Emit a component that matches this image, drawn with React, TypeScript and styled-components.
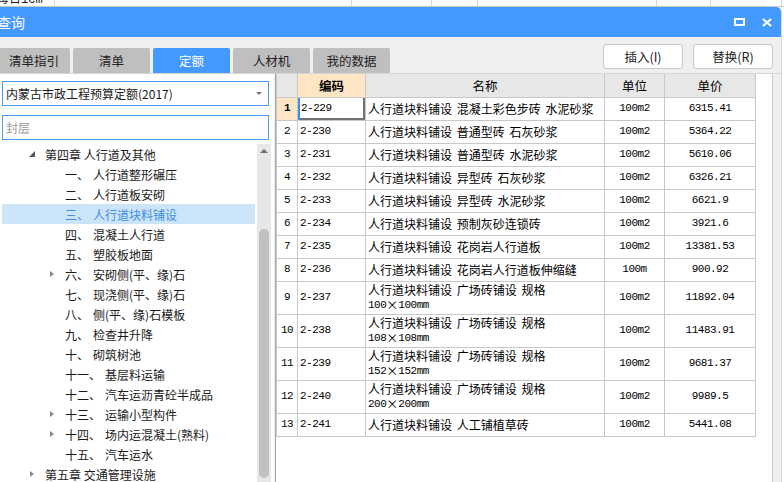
import styled, { createGlobalStyle } from "styled-components";

const GlobalStyle = createGlobalStyle`
  html, body {
    margin: 0;
    padding: 0;
    width: 784px;
    height: 482px;
    overflow: hidden;
    background: #ffffff;
    font-family: "Noto Sans CJK SC", "Noto Sans", sans-serif;
  }
  * { box-sizing: border-box; }
`;

const Screen = styled.div`
  display: flex;
  flex-direction: column;
  width: 784px;
  height: 482px;
  overflow: hidden;
`;

// strip of the sheet behind the dialog
const BackSheet = styled.div`
  display: flex;
  height: 7px;
  border-bottom: 1px solid #c6c6c6;
  background: #fff;
  overflow: hidden;
`;

const BackCell = styled.div<{ $w: number }>`
  flex: 0 0 ${({ $w }) => $w}px;
  border-right: 1px solid #d4d4d4;
  overflow: hidden;
  font-size: 12px;
  line-height: 12px;
  color: #222;
`;

const BackText = styled.div`
  margin-top: -6px;
  margin-left: -3px;
  font-family: "Liberation Mono", "Noto Sans CJK SC", monospace;
`;

const Dialog = styled.div`
  flex: 1;
  display: flex;
  flex-direction: column;
  margin-right: 2px;
  background: #f0f0f0;
  border-top-right-radius: 5px;
  border-right: 1px solid #d8d8d8;
  min-height: 0;
`;

const TitleBar = styled.div`
  height: 30px;
  flex: 0 0 30px;
  display: flex;
  align-items: center;
  justify-content: space-between;
  background: #4499ff;
  border-top-right-radius: 5px;
  color: #fff;
`;

const Title = styled.span`
  margin-left: -3px;
  font-size: 14px;
`;

const WinButtons = styled.div`
  display: flex;
  align-items: center;
  gap: 17px;
  padding-right: 9px;
`;

const Toolbar = styled.div`
  flex: 0 0 36px;
  display: flex;
  justify-content: space-between;
  align-items: flex-start;
`;

const Tabs = styled.div`
  display: flex;
  gap: 3px;
  padding-top: 11px;
  margin-left: -2px;
`;

const Tab = styled.div<{ $active?: boolean; $w: number }>`
  width: ${({ $w }) => $w}px;
  height: 25px;
  display: flex;
  align-items: center;
  justify-content: center;
  border-radius: 2px 2px 0 0;
  font-size: 12.5px;
  background: ${({ $active }) => ($active ? "#4499ff" : "#bfbfbf")};
  color: ${({ $active }) => ($active ? "#fff" : "#222")};
`;

const Actions = styled.div`
  display: flex;
  gap: 10px;
  padding-top: 7px;
  padding-right: 8px;
`;

const ActionButton = styled.button`
  width: 80px;
  height: 25px;
  background: #fff;
  border: 1px solid #c9c9c9;
  border-radius: 3px;
  font-family: "Noto Sans CJK SC", sans-serif;
  font-size: 12.5px;
  color: #222;
  padding: 0;
`;

const Content = styled.div`
  flex: 1;
  display: flex;
  min-height: 0;
  border-top: 1px solid #d6d6d6;
`;

const LeftPanel = styled.div`
  flex: 0 0 274px;
  display: flex;
  flex-direction: column;
  background: #fff;
  padding: 7px 0 0 2px;
  min-height: 0;
`;

const Field = styled.div<{ $placeholder?: boolean }>`
  width: 267px;
  height: 25px;
  flex: 0 0 25px;
  display: flex;
  align-items: center;
  justify-content: space-between;
  border: 1px solid #4a9cf2;
  padding: 0 6px 0 3px;
  font-size: 12px;
  color: ${({ $placeholder }) => ($placeholder ? "#9a9a9a" : "#1a1a1a")};
  margin-bottom: 9px;
`;

const Caret = styled.span`
  width: 0;
  height: 0;
  border-left: 3px solid transparent;
  border-right: 3px solid transparent;
  border-top: 3px solid #777;
`;

const TreeArea = styled.div`
  flex: 1;
  display: flex;
  min-height: 0;
  margin-top: -5px;
`;

const TreeList = styled.div`
  width: 253px;
  overflow: hidden;
`;

const TreeRow = styled.div<{ $level: number; $selected?: boolean }>`
  height: 20px;
  display: flex;
  align-items: center;
  padding-left: ${({ $level }) => 27 + $level * 20}px;
  font-size: 12px;
  white-space: nowrap;
  background: ${({ $selected }) => ($selected ? "#cce4f7" : "transparent")};
  color: ${({ $selected }) => ($selected ? "#3a8ee6" : "#1a1a1a")};
`;

const Arrow = styled.span`
  flex: 0 0 16px;
  display: flex;
  align-items: center;
`;

const Expanded = styled.span`
  width: 0;
  height: 0;
  border-left: 6px solid transparent;
  border-bottom: 6px solid #555;
`;

const Collapsed = styled.span`
  width: 0;
  height: 0;
  margin-left: 1px;
  border-top: 3.5px solid transparent;
  border-bottom: 3.5px solid transparent;
  border-left: 4px solid #8a8a8a;
`;

const Num = styled.span`
  margin-right: 4px;
`;

const ScrollTrack = styled.div`
  width: 14px;
  margin-left: 2px;
  background: #e8e8e8;
  display: flex;
  flex-direction: column;
  align-items: center;
  padding-top: 5px;
`;

const ScrollUp = styled.span`
  width: 0;
  height: 0;
  border-left: 4px solid transparent;
  border-right: 4px solid transparent;
  border-bottom: 4px solid #707070;
`;

const ScrollThumb = styled.div`
  width: 10px;
  height: 249px;
  margin-top: 76px;
  background: #c1c1c1;
  border-radius: 5px;
`;

const TablePanel = styled.div`
  flex: 0 0 498px;
  margin-left: 1px;
  background: #fff;
  border-left: 1px solid #a9a9a9;
  border-right: 1px solid #c9c9c9;
  overflow: hidden;
`;

const Grid = styled.table`
  border-collapse: collapse;
  table-layout: fixed;
  width: 479px;
  font-size: 12px;
  color: #000;
`;

const HeadCell = styled.th<{ $hot?: boolean }>`
  height: 23px;
  padding: 0;
  font-weight: ${({ $hot }) => ($hot ? 700 : 400)};
  font-size: 12.5px;
  background: ${({ $hot }) => ($hot ? "#fde5c6" : "#e7e7e7")};
  border: 1px solid #c8c8c8;
  border-top: none;
`;

const Cell = styled.td<{ $align?: string; $top?: boolean; $mono?: boolean }>`
  padding: 0 2px;
  border: 1px solid #c8c8c8;
  text-align: ${({ $align }) => $align || "left"};
  vertical-align: ${({ $top }) => ($top ? "top" : "middle")};
  font-family: ${({ $mono }) =>
    $mono
      ? `"Liberation Mono", "DejaVu Sans Mono", monospace`
      : `"Noto Sans CJK SC", sans-serif`};
  letter-spacing: ${({ $mono }) => ($mono ? "-0.5px" : "0")};
  font-size: ${({ $mono }) => ($mono ? "11px" : "12px")};
  line-height: 15px;
  white-space: nowrap;
  overflow: hidden;
  word-spacing: 2px;
`;

const RowNo = styled(Cell)<{ $current?: boolean }>`
  background: ${({ $current }) => ($current ? "#fde5c6" : "#fff")};
  font-weight: ${({ $current }) => ($current ? 700 : 400)};
  padding: 0;
`;

const FocusCell = styled(Cell)`
  box-shadow: inset 2px 0 0 #3d8cf4, inset -2px 0 0 #727272,
    inset 0 -2px 0 #727272;
  padding-left: 3px;
`;

const NameLine = styled.div`
  line-height: 16px;
`;

const SizeLine = styled.div`
  display: flex;
  align-items: center;
  height: 14px;
  font-family: "Liberation Mono", "DejaVu Sans Mono", monospace;
  font-size: 11px;
  line-height: 14px;
  letter-spacing: -0.5px;
  word-spacing: 0;
`;

const Times = styled.span`
  font-family: "Noto Sans CJK SC", sans-serif;
  font-size: 12px;
  line-height: 14px;
  letter-spacing: 0;
`;

type Quota = {
  code: string;
  name: string;
  size?: string;
  unit: string;
  price: string;
};

const quotas: Quota[] = [
  { code: "2-229", name: "人行道块料铺设 混凝土彩色步砖 水泥砂浆", unit: "100m2", price: "6315.41" },
  { code: "2-230", name: "人行道块料铺设 普通型砖 石灰砂浆", unit: "100m2", price: "5364.22" },
  { code: "2-231", name: "人行道块料铺设 普通型砖 水泥砂浆", unit: "100m2", price: "5610.06" },
  { code: "2-232", name: "人行道块料铺设 异型砖 石灰砂浆", unit: "100m2", price: "6326.21" },
  { code: "2-233", name: "人行道块料铺设 异型砖 水泥砂浆", unit: "100m2", price: "6621.9" },
  { code: "2-234", name: "人行道块料铺设 预制灰砂连锁砖", unit: "100m2", price: "3921.6" },
  { code: "2-235", name: "人行道块料铺设 花岗岩人行道板", unit: "100m2", price: "13381.53" },
  { code: "2-236", name: "人行道块料铺设 花岗岩人行道板伸缩缝", unit: "100m", price: "900.92" },
  { code: "2-237", name: "人行道块料铺设 广场砖铺设 规格", size: "100", unit: "100m2", price: "11892.04" },
  { code: "2-238", name: "人行道块料铺设 广场砖铺设 规格", size: "108", unit: "100m2", price: "11483.91" },
  { code: "2-239", name: "人行道块料铺设 广场砖铺设 规格", size: "152", unit: "100m2", price: "9681.37" },
  { code: "2-240", name: "人行道块料铺设 广场砖铺设 规格", size: "200", unit: "100m2", price: "9989.5" },
  { code: "2-241", name: "人行道块料铺设 人工铺植草砖", unit: "100m2", price: "5441.08" },
];

type Node = {
  level: number;
  num?: string;
  label: string;
  arrow?: "open" | "closed";
  selected?: boolean;
};

const tree: Node[] = [
  { level: 0, label: "第四章 人行道及其他", arrow: "open" },
  { level: 1, num: "一、", label: "人行道整形碾压" },
  { level: 1, num: "二、", label: "人行道板安砌" },
  { level: 1, num: "三、", label: "人行道块料铺设", selected: true },
  { level: 1, num: "四、", label: "混凝土人行道" },
  { level: 1, num: "五、", label: "塑胶板地面" },
  { level: 1, num: "六、", label: "安砌侧(平、缘)石", arrow: "closed" },
  { level: 1, num: "七、", label: "现浇侧(平、缘)石" },
  { level: 1, num: "八、", label: "侧(平、缘)石模板" },
  { level: 1, num: "九、", label: "检查井升降" },
  { level: 1, num: "十、", label: "砌筑树池" },
  { level: 1, num: "十一、", label: "基层料运输" },
  { level: 1, num: "十二、", label: "汽车运沥青砼半成品" },
  { level: 1, num: "十三、", label: "运输小型构件", arrow: "closed" },
  { level: 1, num: "十四、", label: "场内运混凝土(熟料)", arrow: "closed" },
  { level: 1, num: "十五、", label: "汽车运水" },
  { level: 0, label: "第五章 交通管理设施", arrow: "closed" },
];

const tabs = [
  { label: "清单指引", w: 72 },
  { label: "清单", w: 77 },
  { label: "定额", w: 77, active: true },
  { label: "人材机", w: 77 },
  { label: "我的数据", w: 77 },
];

const backCells = [55, 297, 80, 46, 179, 54, 71];

export default function App() {
  return (
    <Screen>
      <GlobalStyle />
      <BackSheet>
        {backCells.map((w, i) => (
          <BackCell key={i} $w={w}>
            {i === 0 && <BackText>每日1cm</BackText>}
          </BackCell>
        ))}
      </BackSheet>
      <Dialog>
        <TitleBar>
          <Title>查询</Title>
          <WinButtons>
            <svg width="11" height="8" viewBox="0 0 11 8">
              <rect x="1" y="1" width="9" height="6" fill="none" stroke="#fff" strokeWidth="2" />
            </svg>
            <svg width="10" height="9" viewBox="0 0 10 9">
              <path d="M1 1 L9 8 M9 1 L1 8" stroke="#fff" strokeWidth="2.2" />
            </svg>
          </WinButtons>
        </TitleBar>
        <Toolbar>
          <Tabs>
            {tabs.map((t) => (
              <Tab key={t.label} $w={t.w} $active={t.active}>
                {t.label}
              </Tab>
            ))}
          </Tabs>
          <Actions>
            <ActionButton>插入(I)</ActionButton>
            <ActionButton>替换(R)</ActionButton>
          </Actions>
        </Toolbar>
        <Content>
          <LeftPanel>
            <Field>
              内蒙古市政工程预算定额(2017)
              <Caret />
            </Field>
            <Field $placeholder>封层</Field>
            <TreeArea>
              <TreeList>
                {tree.map((n) => (
                  <TreeRow key={n.label} $level={n.level} $selected={n.selected}>
                    <Arrow>
                      {n.arrow === "open" && <Expanded />}
                      {n.arrow === "closed" && <Collapsed />}
                    </Arrow>
                    {n.num && <Num>{n.num}</Num>}
                    {n.label}
                  </TreeRow>
                ))}
              </TreeList>
              <ScrollTrack>
                <ScrollUp />
                <ScrollThumb />
              </ScrollTrack>
            </TreeArea>
          </LeftPanel>
          <TablePanel>
            <Grid>
              <colgroup>
                <col style={{ width: 21 }} />
                <col style={{ width: 68 }} />
                <col style={{ width: 239 }} />
                <col style={{ width: 60 }} />
                <col style={{ width: 91 }} />
              </colgroup>
              <thead>
                <tr>
                  <HeadCell />
                  <HeadCell $hot>编码</HeadCell>
                  <HeadCell>名称</HeadCell>
                  <HeadCell>单位</HeadCell>
                  <HeadCell>单价</HeadCell>
                </tr>
              </thead>
              <tbody>
                {quotas.map((q, i) => {
                  const CodeCell = i === 0 ? FocusCell : Cell;
                  return (
                    <tr key={q.code} style={{ height: q.size ? 33 : 23 }}>
                      <RowNo $align="center" $mono $current={i === 0}>
                        {i + 1}
                      </RowNo>
                      <CodeCell $mono>{q.code}</CodeCell>
                      {q.size ? (
                        <Cell $top>
                          <NameLine>{q.name}</NameLine>
                          <SizeLine>
                            {q.size}
                            <Times>×</Times>
                            {q.size}mm
                          </SizeLine>
                        </Cell>
                      ) : (
                        <Cell>{q.name}</Cell>
                      )}
                      <Cell $align="center" $mono>
                        {q.unit}
                      </Cell>
                      <Cell $align="center" $mono>
                        {q.price}
                      </Cell>
                    </tr>
                  );
                })}
              </tbody>
            </Grid>
          </TablePanel>
        </Content>
      </Dialog>
    </Screen>
  );
}
